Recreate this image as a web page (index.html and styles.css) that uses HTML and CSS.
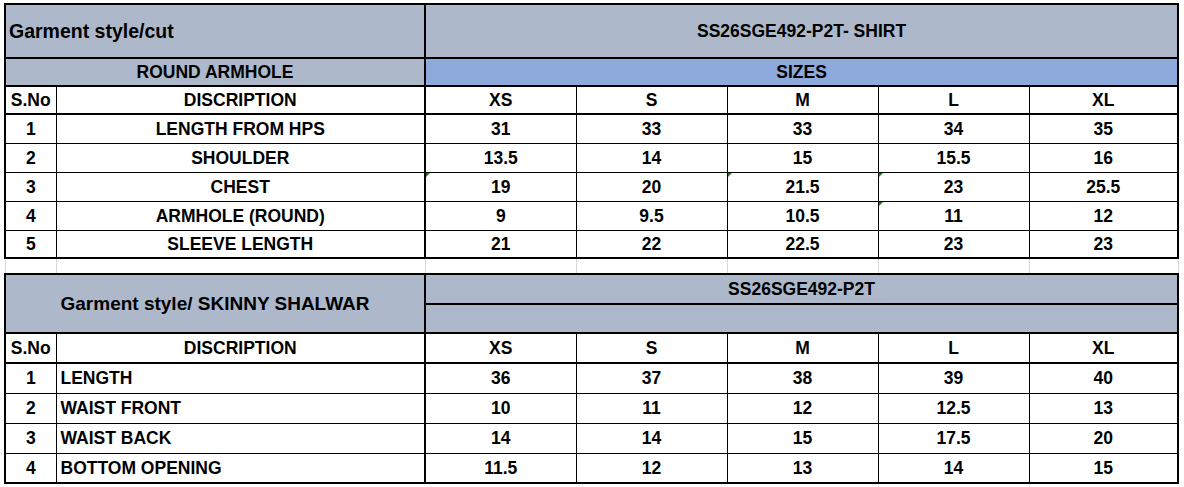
FILE: index.html
```html
<!DOCTYPE html>
<html>
<head>
<meta charset="utf-8">
<link rel="stylesheet" href="styles.css">
</head>
<body>
<table class="sheet">
  <colgroup>
    <col class="c-sno"><col class="c-desc"><col class="c-size"><col class="c-size"><col class="c-size"><col class="c-size"><col class="c-xl">
  </colgroup>
  <tbody>
    <tr class="r-h1">
      <td colspan="2" class="gray left big tl bl-th">Garment style/cut</td>
      <td colspan="5" class="gray sep tl tr-th">SS26SGE492-P2T- SHIRT</td>
    </tr>
    <tr class="r-h2">
      <td colspan="2" class="gray bl-th">ROUND ARMHOLE</td>
      <td colspan="5" class="blue sep tr-th">SIZES</td>
    </tr>
    <tr class="r-h3">
      <td class="bl-th">S.No</td><td>DISCRIPTION</td>
      <td class="sep">XS</td><td>S</td><td>M</td><td>L</td><td class="tr-th">XL</td>
    </tr>
    <tr class="r-d1 first">
      <td class="bl-th">1</td><td>LENGTH FROM HPS</td>
      <td class="sep">31</td><td>33</td><td>33</td><td>34</td><td class="tr-th">35</td>
    </tr>
    <tr class="r-d1">
      <td class="bl-th">2</td><td>SHOULDER</td>
      <td class="sep">13.5</td><td>14</td><td>15</td><td>15.5</td><td class="tr-th">16</td>
    </tr>
    <tr class="r-d1">
      <td class="bl-th">3</td><td>CHEST</td>
      <td class="sep tri">19</td><td>20</td><td class="tri">21.5</td><td class="tri">23</td><td class="tr-th">25.5</td>
    </tr>
    <tr class="r-d1">
      <td class="bl-th">4</td><td>ARMHOLE (ROUND)</td>
      <td class="sep">9</td><td>9.5</td><td>10.5</td><td class="tri">11</td><td class="tr-th">12</td>
    </tr>
    <tr class="r-d1 last">
      <td class="bl-th">5</td><td>SLEEVE LENGTH</td>
      <td class="sep">21</td><td>22</td><td>22.5</td><td>23</td><td class="tr-th">23</td>
    </tr>
    <tr class="r-gap">
      <td></td><td></td><td></td><td></td><td></td><td></td><td></td>
    </tr>
    <tr class="r-b1">
      <td colspan="2" rowspan="2" class="gray big2 tl bl-th hb">Garment style/ SKINNY SHALWAR</td>
      <td colspan="5" class="gray sep tl tr-th hb">SS26SGE492-P2T</td>
    </tr>
    <tr class="r-b2">
      <td colspan="5" class="gray sep tr-th hb"></td>
    </tr>
    <tr class="r-b3">
      <td class="bl-th hb">S.No</td><td class="hb">DISCRIPTION</td>
      <td class="sep hb">XS</td><td class="hb">S</td><td class="hb">M</td><td class="hb">L</td><td class="tr-th hb">XL</td>
    </tr>
    <tr class="r-d2">
      <td class="bl-th">1</td><td class="left pad">LENGTH</td>
      <td class="sep">36</td><td>37</td><td>38</td><td>39</td><td class="tr-th">40</td>
    </tr>
    <tr class="r-d2">
      <td class="bl-th">2</td><td class="left pad">WAIST FRONT</td>
      <td class="sep">10</td><td>11</td><td>12</td><td>12.5</td><td class="tr-th">13</td>
    </tr>
    <tr class="r-d2">
      <td class="bl-th">3</td><td class="left pad">WAIST BACK</td>
      <td class="sep">14</td><td>14</td><td>15</td><td>17.5</td><td class="tr-th">20</td>
    </tr>
    <tr class="r-d2 last">
      <td class="bl-th">4</td><td class="left pad">BOTTOM OPENING</td>
      <td class="sep">11.5</td><td>12</td><td>13</td><td>14</td><td class="tr-th">15</td>
    </tr>
  </tbody>
</table>
</body>
</html>
```
FILE: styles.css
```css
html, body {
  margin: 0;
  padding: 0;
  background: #ffffff;
}
body {
  padding: 3px 0 0 4px;
  font-family: "Liberation Sans", Arial, sans-serif;
  font-weight: bold;
  font-size: 17.5px;
  color: #000000;
}
.sheet {
  border-collapse: collapse;
  table-layout: fixed;
  width: 1173px;
}
.c-sno { width: 51px; }
.c-desc { width: 369px; }
.c-size { width: 151px; }
.c-xl { width: 149px; }

.sheet td {
  border: 1px solid #000000;
  padding: 0;
  text-align: center;
  vertical-align: middle;
  white-space: nowrap;
  overflow: hidden;
  line-height: 18px;
  position: relative;
}
.sheet td.left { text-align: left; padding-left: 3px; }
.sheet td.pad { padding-left: 4px; }
.sheet td.big { font-size: 19.5px; }
.sheet td.big2 { font-size: 19px; }
.sheet td.gray { background: #adb9ca; }
.sheet td.blue { background: #8ea9db; }
.sheet td.sep { border-left: 2px solid #000000; }
.sheet td.tl { border-top: 2px solid #000000; }
.sheet td.bl-th { border-left: 2px solid #000000; }
.sheet td.tr-th { border-right: 2px solid #000000; }
.sheet td.hb { border-bottom: 2px solid #000000; }

.r-h1 td, .r-h2 td, .r-h3 td { border-bottom: 2px solid #000000; }
.r-h1 { height: 54px; }
.r-h2 { height: 28px; }
.r-h3 { height: 28px; }
.r-d1 { height: 29px; }
.r-d1.last { height: 28px; }
.last td { border-bottom: 2px solid #000000; }

.r-gap { height: 16px; }
.sheet .r-gap td {
  border-top: none;
  border-bottom: none;
  border-left: 1px solid #d9d9d9;
  border-right: 1px solid #d9d9d9;
}

.r-b1 { height: 30px; }
.r-b2 { height: 29px; }
.r-b3 { height: 30px; }
.r-d2 { height: 30px; }

.sheet td.tri::before {
  content: "";
  position: absolute;
  top: 0;
  left: 0;
  border-top: 4px solid #1f7a1f;
  border-right: 4px solid transparent;
}
```
